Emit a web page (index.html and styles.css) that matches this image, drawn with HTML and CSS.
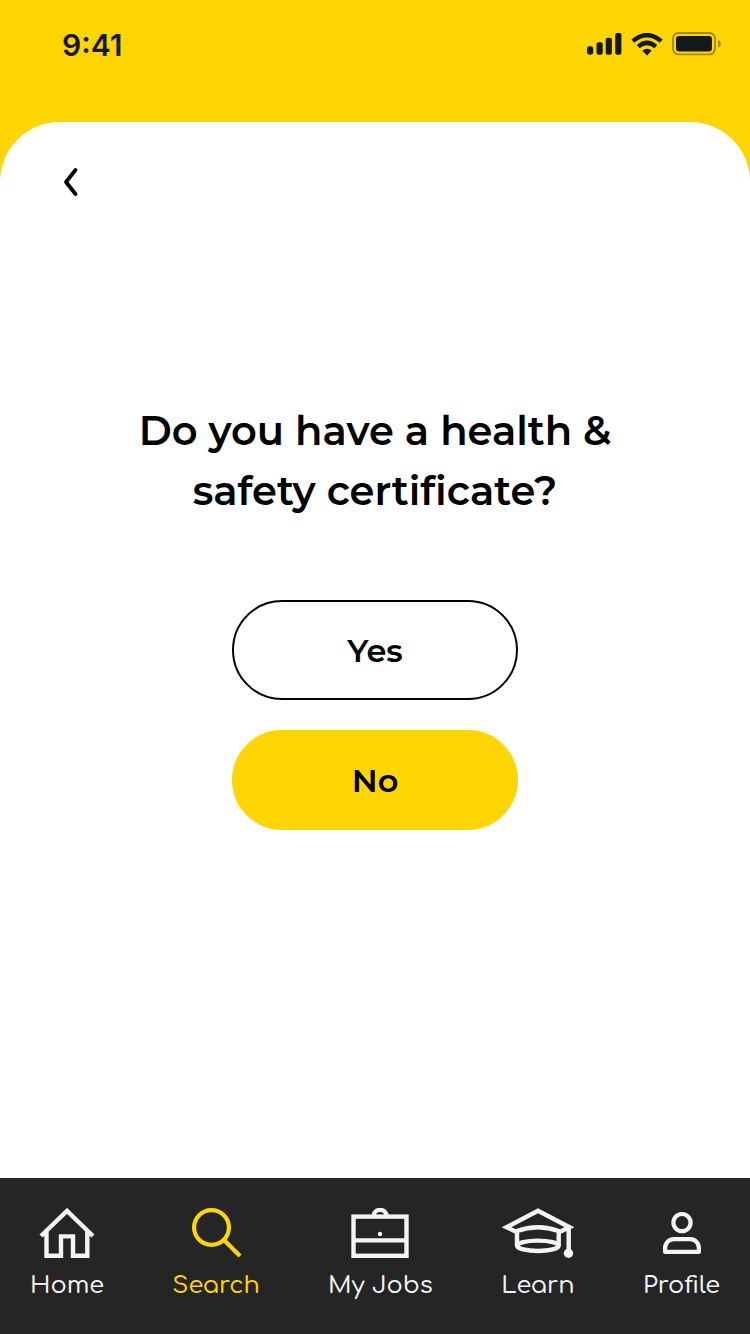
FILE: index.html
```html
<!DOCTYPE html>
<html lang="en">
<head>
<meta charset="utf-8">
<meta name="viewport" content="width=device-width, initial-scale=1">
<title>Health &amp; safety certificate</title>
<link rel="stylesheet" href="styles.css">
</head>
<body>
<header class="status">
  <span class="time">9:41</span>
  <div class="indicators">
    <svg width="35" height="22" viewBox="0 0 35 22" role="img" aria-label="Signal">
      <rect x="0" y="13.3" width="6.2" height="8.4" rx="2.4"/>
      <rect x="9.5" y="9.3" width="6.2" height="12.4" rx="2"/>
      <rect x="18.7" y="4.7" width="6.2" height="17" rx="2"/>
      <rect x="28.2" y="0" width="6.2" height="21.7" rx="2"/>
    </svg>
    <svg width="32" height="23" viewBox="0 0 32 23" role="img" aria-label="Wi-Fi">
      <path d="M1.8 8.1Q16-3.8 30.2 8.1M7.2 13.6Q16 6.2 24.8 13.6" fill="none" stroke="#15181c" stroke-width="4.4"/>
      <path d="M16 22.4 11.3 17.7Q16 13.9 20.7 17.7Z"/>
    </svg>
    <svg width="49" height="24" viewBox="0 0 49 24" role="img" aria-label="Battery">
      <g opacity=".4">
        <rect x="1" y="1" width="42" height="21.4" rx="5.6" fill="none" stroke="#15181c" stroke-width="1.8"/>
        <path d="M46 7.8Q49 9.4 49 11.7T46 15.6Z"/>
      </g>
      <rect x="4" y="4" width="36" height="15.4" rx="3.2"/>
    </svg>
  </div>
</header>
<main class="panel">
  <button class="back" type="button" aria-label="Back">
    <svg width="18" height="30" viewBox="0 0 18 30"><path d="M13.5 3 4 15 13.5 27" fill="none" stroke="#000" stroke-width="3.8" stroke-linecap="round" stroke-linejoin="round"/></svg>
  </button>
  <h1 class="question">Do you have a health &amp; safety certificate?</h1>
  <div class="answers">
    <button class="answer" type="button">Yes</button>
    <button class="answer answer-filled" type="button">No</button>
  </div>
</main>
<nav class="tabs">
  <a class="tab" href="#">
    <svg width="56" height="50" viewBox="0 0 56 50" stroke-width="4.4">
      <path d="M2 28 28 2.9 54 28M7.5 23V47.8H22V28.4H34V47.8H48.3V23"/>
    </svg>
    <span>Home</span>
  </a>
  <a class="tab tab-active" href="#" aria-current="page">
    <svg width="51" height="50" viewBox="0 0 51 50" stroke-width="4.2">
      <circle cx="20.5" cy="19.5" r="17.4"/>
      <path d="M33 32 49 48"/>
    </svg>
    <span>Search</span>
  </a>
  <a class="tab" href="#">
    <svg width="58" height="50" viewBox="0 0 58 50" stroke-width="4.4">
      <rect x="2.5" y="8.6" width="53" height="39.2"/>
      <path d="M2.5 32.4H55.5M22.7 8A6.3 6 0 0 1 35.5 8"/>
      <circle class="solid" cx="29" cy="26" r="2.2"/>
    </svg>
    <span>My Jobs</span>
  </a>
  <a class="tab" href="#">
    <svg width="74" height="50" viewBox="0 0 74 50" stroke-width="4.4">
      <path d="M15 23.8 5.5 19.2 37 2.8 68.5 19.2 59 23.8M16 38V23Q37 15.4 57.7 23V38M67.7 20V42"/>
      <ellipse cx="36.9" cy="37.8" rx="20.8" ry="5.2"/>
      <circle class="solid" cx="67.5" cy="45.2" r="4.7"/>
    </svg>
    <span>Learn</span>
  </a>
  <a class="tab" href="#">
    <svg width="40" height="50" viewBox="0 0 40 50" stroke-width="4.2" stroke-linejoin="round">
      <circle cx="20" cy="14.6" r="8.6"/>
      <path d="M3.1 43.9V40A8.8 8.8 0 0 1 11.9 31.2H28.1A8.8 8.8 0 0 1 36.9 40V43.9Z"/>
    </svg>
    <span>Profile</span>
  </a>
</nav>
</body>
</html>
```

FILE: styles.css
```css
* {
  box-sizing: border-box;
}

body {
  margin: 0;
  min-height: 100vh;
  display: flex;
  flex-direction: column;
  background: #ffd504;
  color: #000;
  font-family: Montserrat, Inter, "Liberation Sans", sans-serif;
}

button {
  font: inherit;
  color: inherit;
  cursor: pointer;
}

svg {
  display: block;
}

.status {
  display: flex;
  justify-content: space-between;
  align-items: flex-start;
  padding: 26px 29px 58px 62px;
  color: #15181c;
}

.time {
  font-family: Inter, sans-serif;
  font-size: 30px;
  font-weight: 600;
  line-height: 38px;
}

.indicators {
  display: flex;
  align-items: center;
  gap: 9px;
  padding-top: 6px;
  fill: #15181c;
}

.panel {
  flex: 1;
  display: flex;
  flex-direction: column;
  align-items: center;
  padding: 37px 54px;
  background: #fff;
  border-radius: 60px 60px 0 0;
}

.back {
  align-self: flex-start;
  padding: 8px;
  border: 0;
  background: none;
}

.question {
  max-width: 500px;
  margin: 196px 0 79px;
  font-size: 40px;
  font-weight: 600;
  line-height: 60px;
  text-align: center;
}

.answers {
  display: grid;
  gap: 30px;
  width: 286px;
}

.answer {
  padding: 29px 28px 27px;
  border: 2px solid #000;
  border-radius: 50px;
  background: #fff;
  font-size: 32px;
  font-weight: 600;
  line-height: 40px;
}

.answer-filled {
  border-color: #ffd504;
  background: #ffd504;
}

.tabs {
  display: flex;
  justify-content: space-between;
  padding: 30px 30px 33px;
  background: #252525;
}

.tab {
  display: flex;
  flex-direction: column;
  align-items: center;
  gap: 13px;
  color: #f4f4f4;
  font-family: Comfortaa, Quicksand, Lato, sans-serif;
  font-size: 24px;
  font-weight: 500;
  line-height: 30px;
  text-decoration: none;
}

.tab svg {
  fill: none;
  stroke: currentColor;
}

.tab .solid {
  fill: currentColor;
  stroke: none;
}

.tab-active {
  color: #ffd504;
}
```
